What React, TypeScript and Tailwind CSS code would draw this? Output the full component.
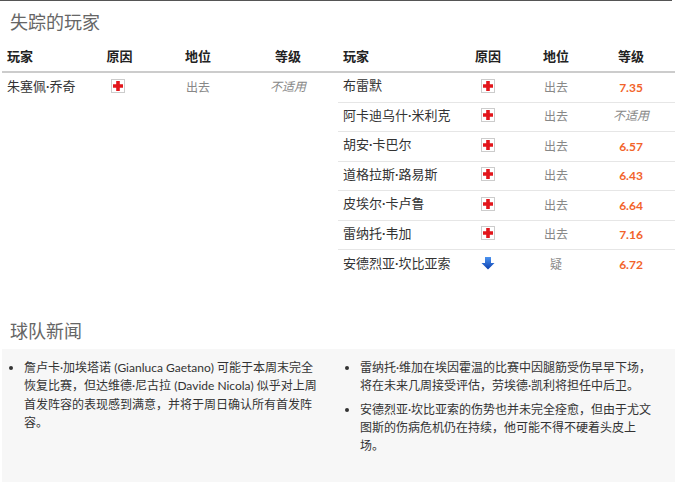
const font = "[font-family:Lato,'Noto_Sans_CJK_SC',sans-serif]";

function Injury() {
  return (
    <span className="inline-flex w-[14px] h-[14px] border border-[#cccccc] items-center justify-center bg-white">
      <svg width="10" height="10" viewBox="0 0 10 10">
        <path d="M3.2 0h3.6v3.2H10v3.6H6.8V10H3.2V6.8H0V3.2h3.2z" fill="#e2151b" />
      </svg>
    </span>
  );
}

function Doubt() {
  return (
    <svg width="14" height="14" viewBox="0 0 14 14">
      <defs>
        <linearGradient id="doubt" x1="0" y1="0" x2="0" y2="1">
          <stop offset="0" stopColor="#4d94f0" />
          <stop offset="1" stopColor="#0b3fae" />
        </linearGradient>
      </defs>
      <path d="M4 1h6v6h3.5L7 13.5.5 7H4z" fill="url(#doubt)" />
    </svg>
  );
}

type Row = { name: string; doubt?: boolean; rating: string | null };

const leftRows: Row[] = [{ name: '朱塞佩·乔奇', rating: null }];

const rightRows: Row[] = [
  { name: '布雷默', rating: '7.35' },
  { name: '阿卡迪乌什·米利克', rating: null },
  { name: '胡安·卡巴尔', rating: '6.57' },
  { name: '道格拉斯·路易斯', rating: '6.43' },
  { name: '皮埃尔·卡卢鲁', rating: '6.64' },
  { name: '雷纳托·韦加', rating: '7.16' },
  { name: '安德烈亚·坎比亚索', doubt: true, rating: '6.72' },
];

function PlayerTable({ rows, cols, border, width, reasonHead = '' }: { rows: Row[]; cols: string; border: boolean; width: string; reasonHead?: string }) {
  return (
    <div className={width}>
      <div className={`grid ${cols} h-[30px] items-center border-b-2 border-[#cccccc] text-[13px] font-bold text-[#222222]`}>
        <div className="pl-[5px]">玩家</div>
        <div className={`text-center whitespace-nowrap ${reasonHead}`}>原因</div>
        <div className="text-center">地位</div>
        <div className="text-center">等级</div>
      </div>
      {rows.map((r, i) => (
        <div
          key={r.name}
          className={`grid ${cols} h-[29.5px] pb-[3px] items-center ${border && i < rows.length - 1 ? 'border-b border-[#e6e6e6]' : ''}`}
        >
          <div className="pl-[5px] text-[13px] text-[#333333] whitespace-nowrap">{r.name}</div>
          <div className="flex justify-center">{r.doubt ? <Doubt /> : <Injury />}</div>
          <div className="pt-[4px] text-center text-[12px] text-[#888888]">{r.doubt ? '疑' : '出去'}</div>
          {r.rating ? (
            <div className="pt-[4px] text-center text-[12px] font-bold text-[#f2632a]">{r.rating}</div>
          ) : (
            <div className="pt-[2px] text-center text-[12px] italic text-[#888888]">不适用</div>
          )}
        </div>
      ))}
    </div>
  );
}

export default function App() {
  return (
    <div className={`${font} w-[675px] h-[482px] bg-white overflow-hidden`}>
      <div className="w-[672px] border-t border-[#555555]" />

      {/* Missing players */}
      <h2 className="pl-[10px] h-[42px] flex items-center text-[18px] font-normal text-[#666666]">失踪的玩家</h2>
      <div className="flex pl-[2px]">
        <PlayerTable rows={leftRows} cols="grid-cols-[96px_40px_120px_60px]" border={false} width="w-[336px]" reasonHead="pl-[3px]" />
        <PlayerTable rows={rightRows} cols="grid-cols-[130px_40px_96px_54px]" border width="w-[337px]" />
      </div>

      {/* Team news */}
      <h2 className="mt-[35px] pl-[10px] h-[34.5px] flex items-center text-[18px] font-normal text-[#666666]">球队新闻</h2>
      <div className="ml-[2px] h-[133px] bg-[#f7f7f7] grid grid-cols-[336px_1fr] text-[12px] leading-[18.3px] text-[#333333]">
        <ul className="list-disc pl-[22px] pr-[18px] pt-[10px]">
          <li>詹卢卡·加埃塔诺 (Gianluca Gaetano) 可能于本周末完全恢复比赛，但达维德·尼古拉 (Davide Nicola) 似乎对上周首发阵容的表现感到满意，并将于周日确认所有首发阵容。</li>
        </ul>
        <ul className="list-disc pl-[22px] pr-[18px] pt-[10px] flex flex-col gap-[5px]">
          <li>雷纳托·维加在埃因霍温的比赛中因腿筋受伤早早下场，将在未来几周接受评估，劳埃德·凯利将担任中后卫。</li>
          <li>安德烈亚·坎比亚索的伤势也并未完全痊愈，但由于尤文图斯的伤病危机仍在持续，他可能不得不硬着头皮上场。</li>
        </ul>
      </div>
    </div>
  );
}
